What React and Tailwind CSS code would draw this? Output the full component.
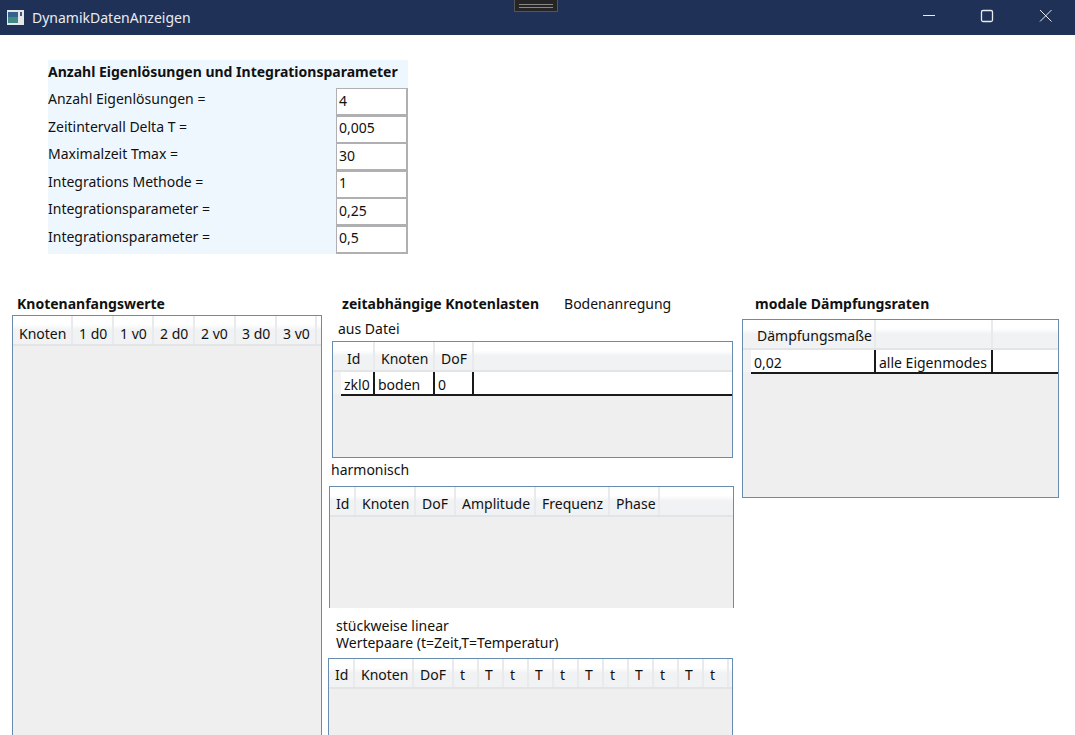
import React from 'react';

const params = [
  ['Anzahl Eigenlösungen =', '4'],
  ['Zeitintervall Delta T =', '0,005'],
  ['Maximalzeit Tmax =', '30'],
  ['Integrations Methode =', '1'],
  ['Integrationsparameter =', '0,25'],
  ['Integrationsparameter =', '0,5'],
];

const headerBg = 'bg-gradient-to-b from-white from-30% to-[#f1f2f3] to-50%';

const HeaderCell = ({ width, label, textClass }) => (
  <div
    className={`shrink-0 h-full flex items-center pl-1.5 border-r-2 border-[#e8eaec] whitespace-nowrap overflow-hidden ${headerBg} ${textClass}`}
    style={{ width }}
  >
    {label}
  </div>
);

// DataGrid: header row, optional data row, gray empty area below
const Grid = ({ cols, row, gutter = 0, textClass = 'pt-[4px]', className = '' }) => (
  <div className={`border border-[#688caf] bg-[#efefef] overflow-hidden ${className}`}>
    <div className="flex h-[30px] border-b-2 border-[#e3e4e6]">
      {gutter > 0 && <div className={`shrink-0 h-full ${headerBg}`} style={{ width: gutter }} />}
      {cols.map((c, i) => <HeaderCell key={i} width={c.w} label={c.label} textClass={textClass} />)}
      <div className={`flex-1 h-full ${headerBg}`} />
    </div>
    {row && (
      <div className="flex h-[24px]">
        <div className="shrink-0 bg-[#f3f3f3] h-[22px]" style={{ width: gutter }} />
        <div className="flex flex-1 bg-white border-b-2 border-[#1a1a1a]">
          {cols.map((c, i) => (
            <div key={i} className="shrink-0 flex items-center pl-[3px] pt-[2px] border-r-2 border-[#1a1a1a] whitespace-nowrap overflow-hidden" style={{ width: c.w }}>
              {row[i]}
            </div>
          ))}
        </div>
      </div>
    )}
  </div>
);

const App = () => {
  const pairs = ['t', 'T', 't', 'T', 't', 'T', 't', 'T', 't', 'T', 't'].map((label) => ({ label, w: 25 }));
  return (
    <div className="w-[1075px] h-[735px] overflow-hidden bg-white text-[14px] leading-[17px] text-[#111] font-['Noto_Sans','Liberation_Sans',sans-serif] relative">
      <div className="h-[35px] bg-[#1f3157] flex items-center pl-[7px] text-[#e8ebf0]">
        <svg width="17" height="16" viewBox="0 0 17 16" className="mr-[8px] shrink-0">
          <rect width="17" height="15" fill="#e4e6e8" />
          <rect x="1" y="2" width="10" height="11" fill="#3e8a86" />
          <rect x="1" y="2" width="10" height="5" fill="#35618f" />
          <rect x="13" y="2" width="2" height="4" fill="#4a5a70" />
        </svg>
        <span className="text-[14px]">DynamikDatenAnzeigen</span>
        <div className="ml-auto flex h-full items-center">
          <svg width="174" height="35" viewBox="0 0 174 35" fill="none" stroke="#e8ebf0" strokeWidth="1">
            <path d="M22 15.5H34" />
            <rect x="80.5" y="10.500" width="11" height="11" rx="1.5" strokeWidth="1.3" />
            <path d="M139 10l11.500 11.500M150.500 10L139 21.500" />
          </svg>
        </div>
      </div>

      {/* snap handle that sits over the title bar */}
      <div className="absolute left-[514px] top-0 w-[44px] h-[12px] bg-[#252525] border border-[#555] border-t-0 flex flex-col items-center justify-center gap-[2px]">
        <div className="w-[34px] h-px bg-[#888]" />
        <div className="w-[34px] h-px bg-[#888]" />
      </div>

      <div className="ml-[48px] mt-[25px] w-[360px] h-[194px] bg-[#eff7fe]">
        <div className="h-[28px] flex items-start pt-[3px] font-bold">Anzahl Eigenlösungen und Integrationsparameter</div>
        {params.map(([label, value], i) => (
          <div key={i} className="flex justify-between h-[27.5px]">
            <div className="pt-[2px]">{label}</div>
            <div className="w-[72px] h-[28px] bg-white border-2 border-[#b0b0b3] border-t border-l flex items-center pl-[2px] pb-[3px]">{value}</div>
          </div>
        ))}
      </div>

      <div className="flex items-start mt-[39px]">
        <div className="ml-[12px] w-[310px] shrink-0">
          <div className="h-[22px] pl-[5px] pb-[2px] flex items-center font-bold">Knotenanfangswerte</div>
          <Grid
            className="h-[500px]"
            textClass="pt-[6px]"
            cols={[
              { label: 'Knoten', w: 60 },
              { label: '1 d0', w: 41 },
              { label: '1 v0', w: 40 },
              { label: '2 d0', w: 41 },
              { label: '2 v0', w: 41 },
              { label: '3 d0', w: 41 },
              { label: '3 v0', w: 40 },
            ]}
          />
        </div>

        <div className="ml-[6px] w-[407px] shrink-0">
          <div className="h-[22px] flex items-center pl-[14px] pb-[2px]">
            <span className="font-bold">zeitabhängige Knotenlasten</span>
            <span className="ml-[25px]">Bodenanregung</span>
          </div>
          <div className="h-[20px] flex items-center pl-[10px] mt-[3px]">aus Datei</div>
          <Grid
            className="ml-[4px] w-[401px] h-[117px] mt-[3px]"
            gutter={8}
            cols={[
              { label: 'Id', w: 34 },
              { label: 'Knoten', w: 60 },
              { label: 'DoF', w: 39 },
            ]}
            row={['zkl0', 'boden', '0']}
          />
          <div className="h-[20px] flex items-center pl-[3px] mt-[1px]">harmonisch</div>
          <Grid
            className="ml-[1px] w-[405px] h-[122px] mt-[7px] border-b-0"
            cols={[
              { label: 'Id', w: 26 },
              { label: 'Knoten', w: 60 },
              { label: 'DoF', w: 40 },
              { label: 'Amplitude', w: 80 },
              { label: 'Frequenz', w: 74 },
              { label: 'Phase', w: 50 },
            ]}
          />
          <div className="pl-[8px] pt-[9px]">
            stückweise linear
            <br />
            Wertepaare (t=Zeit,T=Temperatur)
          </div>
          <Grid
            className="w-[405px] h-[200px] mt-[7px]"
            textClass="pt-[2px]"
            cols={[
              { label: 'Id', w: 26 },
              { label: 'Knoten', w: 59 },
              { label: 'DoF', w: 40 },
              ...pairs,
            ]}
          />
        </div>

        <div className="ml-[7px] w-[317px] shrink-0">
          <div className="h-[22px] pl-[13px] pb-[2px] flex items-center font-bold">modale Dämpfungsraten</div>
          <Grid
            className="h-[179px] mt-[4px]"
            textClass="pt-[2px]"
            gutter={8}
            cols={[
              { label: 'Dämpfungsmaße', w: 125 },
              { label: '', w: 117 },
            ]}
            row={['0,02', 'alle Eigenmodes']}
          />
        </div>
      </div>
    </div>
  );
};

export default App;
